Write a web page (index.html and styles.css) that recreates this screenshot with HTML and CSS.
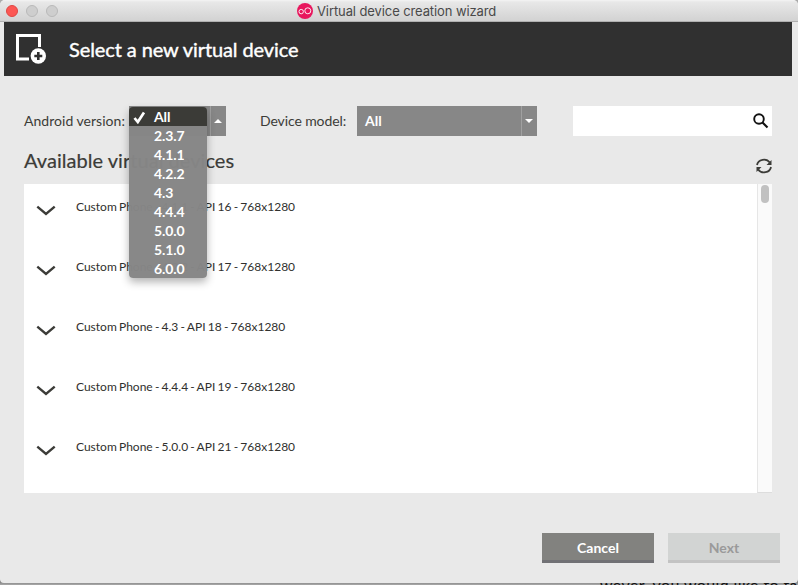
FILE: index.html
```html
<!DOCTYPE html>
<html lang="en">
<head>
<meta charset="utf-8">
<title>Virtual device creation wizard</title>
<link rel="stylesheet" href="styles.css">
</head>
<body>
<div class="backdrop"><span class="backdrop-text">wever, you would like to talk</span></div>
<main class="window">
  <header class="titlebar">
    <div class="lights"><i class="light close"></i><i class="light"></i><i class="light"></i></div>
    <div class="title">
      <svg width="16" height="16" viewBox="0 0 16 16"><circle cx="8" cy="8" r="8" fill="#e8175d"/><g fill="none" stroke="#fff" stroke-width=".9"><circle cx="4.200" cy="8.600" r="2.200"/><circle cx="10.800" cy="7.800" r="3"/></g></svg>
      <span class="title-text">Virtual device creation wizard</span>
    </div>
  </header>
  <section class="banner">
    <svg class="banner-icon" width="31" height="31" viewBox="0 0 31 31"><path d="M13 25H1.500v-23.500h22V13" fill="none" stroke="#fff" stroke-width="3"/><circle cx="22.300" cy="22" r="9" fill="#303030"/><circle cx="22.300" cy="22" r="7.700" fill="#fff"/><path d="M22.300 18v8M18.300 22h8" stroke="#303030" stroke-width="2.600"/></svg>
    <h1>Select a new virtual device</h1>
  </section>
  <section class="filters">
    <label class="android-label">Android version:</label>
    <div class="select version"><span class="arrow"><svg width="8" height="4"><path d="M0 4L4 0l4 4z" fill="#fff"/></svg></span>
      <ul class="menu">
        <li class="selected"><svg class="check" width="13" height="13" viewBox="0 0 13 13"><path d="M1.500 7l3.300 4L11 1.500" fill="none" stroke="#fff" stroke-width="2.700"/></svg>All</li>
        <li>2.3.7</li><li>4.1.1</li><li>4.2.2</li><li>4.3</li><li>4.4.4</li><li>5.0.0</li><li>5.1.0</li><li>6.0.0</li>
      </ul>
    </div>
    <label class="model-label">Device model:</label>
    <div class="select model"><span class="value">All</span><span class="arrow"><svg width="8" height="4"><path d="M0 0h8L4 4z" fill="#fff"/></svg></span></div>
    <div class="search"><svg width="16" height="16" viewBox="0 0 16 16"><circle cx="6" cy="6" r="4.800" fill="none" stroke="#111" stroke-width="1.900"/><path d="M9.500 9.500l5 5" stroke="#111" stroke-width="2.200"/></svg></div>
  </section>
  <section class="heading">
    <h2>Available virtual devices</h2>
    <svg class="refresh" width="16" height="16" viewBox="0 0 16 16"><g fill="none" stroke="#3c3c38" stroke-width="1.800"><path d="M1 7A7 6.400 0 0 1 13.800 4.600M15 9A7 6.400 0 0 1 2.200 11.400"/></g><path d="M15.500 2v5h-5zM.5 14V9h5z" fill="#3c3c38"/></svg>
  </section>
  <section class="list">
    <div class="rows">
      <div class="row"><svg class="chev" width="20" height="12"><path d="M1.300 1.600L10 9l8.700-7.400"/></svg><span>Custom Phone - 4.1.1 - API 16 - 768x1280</span></div>
      <div class="row"><svg class="chev" width="20" height="12"><path d="M1.300 1.600L10 9l8.700-7.400"/></svg><span>Custom Phone - 4.2.2 - API 17 - 768x1280</span></div>
      <div class="row"><svg class="chev" width="20" height="12"><path d="M1.300 1.600L10 9l8.700-7.400"/></svg><span>Custom Phone - 4.3 - API 18 - 768x1280</span></div>
      <div class="row"><svg class="chev" width="20" height="12"><path d="M1.300 1.600L10 9l8.700-7.400"/></svg><span>Custom Phone - 4.4.4 - API 19 - 768x1280</span></div>
      <div class="row"><svg class="chev" width="20" height="12"><path d="M1.300 1.600L10 9l8.700-7.400"/></svg><span>Custom Phone - 5.0.0 - API 21 - 768x1280</span></div>
    </div>
    <div class="scrollbar"><div class="thumb"></div></div>
  </section>
  <footer class="actions"><button class="cancel">Cancel</button><button class="next" disabled>Next</button></footer>
</main>
</body>
</html>
```

FILE: styles.css
```css
* { box-sizing: border-box; }
body { margin: 0; width: 798px; height: 585px; overflow: hidden; position: relative; background: #aaa; font-family: Lato, "Liberation Sans", sans-serif; color: #3c3c38; }
h1, h2, ul { margin: 0; padding: 0; font-weight: 400; list-style: none; }
svg { display: block; flex: none; }
.backdrop { position: absolute; left: 0; right: 0; bottom: 0; height: 5px; overflow: hidden; background: linear-gradient(#666, #aaa); }
.backdrop-text { position: absolute; left: 600px; top: -4px; font-size: 16px; line-height: 18px; letter-spacing: .4px; color: #111; white-space: nowrap; }
.window { position: relative; height: 583px; background: #e9e9e9; border-radius: 5px 5px 4px 4px; }
.titlebar { height: 22px; padding-left: 6px; display: flex; align-items: center; background: linear-gradient(#f4f4f4, #e8e8e8 2px, #d2d2d2); border-bottom: 1px solid #b0b0b0; border-radius: 5px 5px 0 0; }
.lights { display: flex; gap: 8px; width: 291px; }
.light { width: 12px; height: 12px; border-radius: 50%; background: #cecece; border: 1px solid #b9b9b9; }
.close { background: #fc5753; border-color: #df4744; }
.title { display: flex; align-items: center; gap: 4px; font: 13px/20px Inter, sans-serif; color: #494949; }
.title-text { letter-spacing: -.1px; white-space: nowrap; }
.banner { margin: 0 6px 0 4px; height: 54px; padding: 0 0 0 12px; display: flex; align-items: center; background: #303030; color: #fff; }
.banner-icon { margin-right: 22px; margin-top: 1px; }
h1 { font-size: 20px; line-height: 24px; letter-spacing: -.1px; -webkit-text-stroke: .4px; white-space: nowrap; }
.filters { margin: 30px 26px 0 24px; height: 30px; display: flex; align-items: center; font-size: 14px; white-space: nowrap; }
.android-label { width: 105px; padding-bottom: 2px; letter-spacing: .03px; }
.select { position: relative; height: 30px; display: flex; align-items: center; justify-content: space-between; background: #878787; color: #fff; }
.version { width: 97px; justify-content: flex-end; }
.arrow { width: 16px; height: 30px; border-left: 1px solid #a0a0a0; display: grid; place-items: center; padding-right: 1px; }
.menu { position: absolute; z-index: 2; left: 0; top: 1px; width: 78px; height: 171px; background: rgba(134,134,134,.98); border-radius: 4px; overflow: hidden; box-shadow: 0 4px 9px rgba(0,0,0,.3); font-size: 14px; font-weight: 700; line-height: 19px; }
.menu li { position: relative; padding-left: 25px; height: 19px; letter-spacing: -.1px; }
.menu .selected { background: #3b3b37; line-height: 19px; }
.check { position: absolute; left: 4px; top: 4px; }
.model-label { margin-left: 34px; width: 97px; padding-bottom: 2px; letter-spacing: -.1px; }
.model { width: 180px; }
.value { padding: 0 0 2px 8px; font-weight: 700; }
.search { margin-left: auto; width: 199px; height: 30px; padding-right: 3px; display: flex; align-items: center; justify-content: flex-end; background: #fff; }
.heading { margin: 0 26px 0 24px; height: 48px; display: flex; justify-content: space-between; }
h2 { font-size: 20px; line-height: 24px; padding-top: 12px; letter-spacing: .04px; -webkit-text-stroke: .2px; }
.refresh { margin-top: 22px; }
.list { margin: 0 26px 0 24px; height: 309px; display: flex; background: #fff; }
.rows { flex: 1; }
.row { height: 60px; padding: 14px 0 0 12px; display: flex; gap: 20px; font-size: 12px; line-height: 18px; white-space: nowrap; }
.chev { margin: 7px 0 0; fill: none; stroke: #3c3c38; stroke-width: 2.4; }
.row span { word-spacing: -.85px; color: #30302e; }
.scrollbar { width: 15px; border-left: 1px solid #e6e6e6; border-bottom: 1px solid #ddd; background: #fafafa; padding: 1px 0 0 3px; }
.thumb { width: 8px; height: 18px; border-radius: 4px; background: #c1c1c1; }
.actions { margin: 40px 18px 0; display: flex; justify-content: flex-end; gap: 14px; }
button { width: 112px; height: 30px; padding: 3px 0 0; border: 0; border-bottom: 3px solid #717175; background: #82827f; color: #fff; font: 700 14px/24px Lato, sans-serif; }
.next { background: #d2d4d3; border-color: #c3c3c3; color: #9a9a9a; }
```
